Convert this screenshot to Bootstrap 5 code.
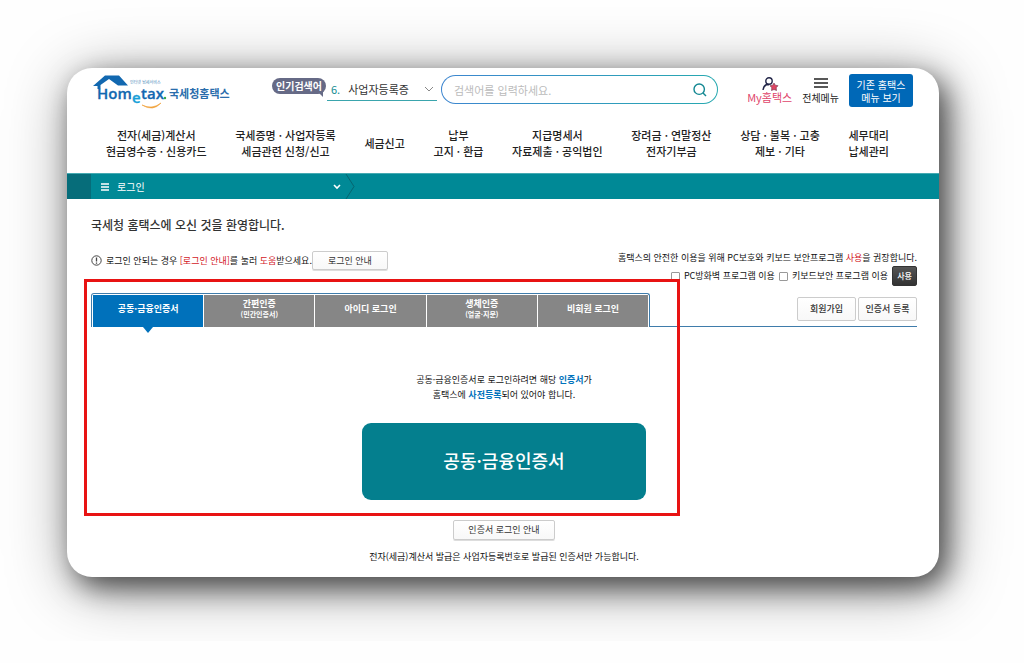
<!DOCTYPE html>
<html lang="ko">
<head>
<meta charset="utf-8">
<meta name="viewport" content="width=device-width, initial-scale=1">
<title>국세청 홈택스 로그인</title>
<link href="https://cdn.jsdelivr.net/npm/bootstrap@5.3.0/dist/css/bootstrap.min.css" rel="stylesheet">
<style>
  body { font-family: "Noto Sans CJK KR", sans-serif; font-size: 9px; line-height: 16px; color: #111; background: #fefefe; }
  a { color: inherit; text-decoration: none; }
  .shell { margin: 68px 85px 64px 67px; border-radius: 25px; background: #fff;
    box-shadow: 8px 10px 28px rgba(0,0,0,.62), 4px 10px 64px rgba(0,0,0,.4); }
  .shell-top { padding: 6px 26px 0 26px; height: 46px; }
  .logo { width: 138px; height: 36px; }
  .hot-tag { margin-left: 41px; padding: 0 4px; height: 16px; border-radius: 8px; background: #666a86; color: #fff; font-size: 10px; font-weight: 700; }
  .hot-tag::after { content: ""; position: absolute; right: 3px; bottom: -3px; border: 3px solid transparent; border-right-color: #666a86; border-top-color: #666a86; }
  .keyword { width: 110px; height: 24px; border-bottom: 1px solid #3aa5ad; margin: 3px 4px 0 1px; font-size: 11px; padding-left: 4px; }
  .keyword label { color: #138c92; }
  .keyword select { appearance: none; border: 0; background: none; color: #333; font-size: 11px; padding: 0; }
  .search { height: 29px; margin-top: 1px; border: 1px solid transparent; border-radius: 15px; padding: 0 10px 0 12px;
    background: linear-gradient(#fff,#fff) padding-box, linear-gradient(90deg,#3d86d0,#27a9b0) border-box; }
  .search input { border: 0; outline: 0; min-width: 0; font-size: 11px; color: #333; background: none; padding: 0; }
  .search input::placeholder { color: #bbb; }
  .search button { border: 0; background: none; padding: 0; line-height: 0; }
  .quick { font-size: 10px; line-height: 13px; color: #222; margin-top: 3px; }
  .quick svg { display: block; margin: 0 auto; }
  .my { color: #e0456b; font-size: 11px; margin: 3px 10px 0 29px; }
  .old-menu { width: 64px; height: 33px; margin-left: 10px; border: 0; border-radius: 3px; background: #0068b7; color: #fff; font-size: 10px; line-height: 13px; padding: 0; }
  .gnb { padding: 13px 50px 14px 39px; font-size: 11px; line-height: 16px; font-weight: 500; color: #222; }
  .crumb { height: 26px; background: #008996; color: #fff; font-size: 10px; border-top: 1px solid #45aab2; }
  .crumb-home { width: 24px; background: #066d7a; }
  .crumb-item { width: 264px; padding: 0 0 0 10px; }
  .content { padding: 18px 22px 12px 24px; }
  h1 { font-size: 12px; line-height: 16px; font-weight: 500; color: #333; margin: 0; }
  .red { color: #d3201f; }
  .blue { color: #0072bc; font-weight: 700; }
  .soft { border: 1px solid #ccc; border-radius: 2px; background: linear-gradient(#fff,#f8f8f8); color: #333; font-size: 9px; line-height: 12px; padding: 0; box-shadow: 0 1px 0 #ddd; }
  .soft-sm { width: 76px; height: 19px; }
  .soft-md { width: 102px; height: 20px; }
  .soft-lg { width: 59px; height: 24px; font-weight: 500; box-shadow: none; }
  .notice { margin-top: 17px; }
  .notice-left { padding-top: 1px; }
  .options input { appearance: none; width: 9px; height: 9px; border: 1px solid #999; border-radius: 1px; background: #fff; margin: 0; }
  .use { width: 25px; height: 20px; border: 1px solid #333; border-radius: 2px; background: linear-gradient(#555,#333); color: #fff; font-size: 8px; line-height: 12px; padding: 0; font-weight: 500; }
  .login-area { margin-top: 7px; padding-bottom: 16px; }
  .highlight { left: -7px; top: -14px; bottom: 0; width: 72.2%; border: 3px solid #e81313; pointer-events: none; }
  .tab-row { border-bottom: 1px solid #3f7cab; height: 34px; }
  .login-tabs { width: 67.7%; height: 34px; border: 1px solid #3f7cab; border-bottom: 0; border-radius: 3px 3px 0 0; padding: 1px 1px 0; gap: 1px; background: #fff; }
  .login-tabs button { flex: 1 1 0; border: 0; padding: 0 0 6px; background: #868686; color: #fff; font-size: 9px; line-height: 11px; font-weight: 700; }
  .login-tabs small { display: block; font-size: 7px; line-height: 11px; }
  .login-tabs .two { padding-bottom: 4px; }
  .login-tabs .active { background: #0071bb; position: relative; }
  .login-tabs .active::after { content: ""; position: absolute; left: 50%; top: 100%; margin-left: -5px; border: 5px solid transparent; border-top: 6px solid #0071bb; border-bottom: 0; }
  .tab-side { gap: 2px; }
  .guide { margin-top: 45px; line-height: 15px; }
  .cert { width: 284px; height: 77px; margin-top: 21px; border: 0; border-radius: 9px; background: #047f8e; color: #fff; font-size: 18px; font-weight: 500; padding: 0 0 4px; }
  .issue { margin-top: 9px; }
</style>
</head>
<body>
<div class="shell">
  <header>
    <div class="shell-top d-flex align-items-start">
      <a href="#" class="logo flex-shrink-0" aria-label="홈택스">
        <svg width="138" height="36" viewBox="0 0 138 36">
          <path d="M0 12 12 1.500H26L35 11.500H25L16 5 7.500 11V15H4.500V12Z" fill="#1268b0"/>
          <text x="37" y="10" font-size="4" fill="#4b87b8">인터넷 납세서비스</text>
          <g font-family="Open Sans, sans-serif" font-weight="600" font-size="15" fill="#1268b0" stroke="#1268b0" stroke-width=".3">
            <text x="4" y="25">Hom</text><text x="39" y="29" fill="#18a0d8" stroke="#18a0d8">e</text><text x="48" y="25">tax</text>
          </g>
          <circle cx="72" cy="24" r="1.200" fill="#38a846"/>
          <path d="M49 31Q59 36 68 29Q60 38 49 31Z" fill="#f0a036" stroke="#f0a036" stroke-width=".6"/>
          <text x="76" y="24" font-size="11" font-weight="700" fill="#2a6dac">국세청홈택스</text>
        </svg>
      </a>
      <span class="hot-tag position-relative flex-shrink-0 mt-1">인기검색어</span>
      <div class="keyword d-flex align-items-center flex-shrink-0 position-relative">
        <label for="kw" class="me-2">6.</label>
        <select id="kw" class="flex-grow-1"><option>사업자등록증</option></select>
        <svg class="position-absolute end-0 me-1" width="8" height="6" viewBox="0 0 8 6" fill="none" stroke="#888"><path d="m0 1 4 4 4-4"/></svg>
      </div>
      <form class="search d-flex align-items-center flex-grow-1">
        <input class="flex-grow-1" type="text" placeholder="검색어를 입력하세요." aria-label="검색어">
        <button type="button" aria-label="검색"><svg width="14" height="14" viewBox="0 0 14 14" fill="none" stroke="#128792" stroke-width="1.4"><circle cx="6.2" cy="6.2" r="5.2"/><path d="m10 10 3 3"/></svg></button>
      </form>
      <a href="#" class="quick my text-center flex-shrink-0">
        <svg width="18" height="14" viewBox="0 0 18 14"><g fill="none" stroke="#222548" stroke-width="1.4"><circle cx="8" cy="4" r="3.200"/><path d="M2 13Q2.500 9 5.500 7.500L8 7.800"/></g><path d="m13 6 1.200 2.200 2.800.5-1.800 2 .3 2.800-2.500-1-2.500 1 .3-2.800-1.800-2 2.800-.5Z" fill="#df4663" stroke="#6b304c" stroke-width=".6"/></svg>My홈택스</a>
      <a href="#" class="quick text-center flex-shrink-0">
        <svg width="14" height="14" viewBox="0 0 14 14" stroke="#222" stroke-width="1.400"><path d="M0 2h14M0 6h14M0 10h14"/></svg>전체메뉴</a>
      <button class="old-menu flex-shrink-0">기존 홈택스<br>메뉴 보기</button>
    </div>
    <nav class="gnb d-flex justify-content-between align-items-center text-center text-nowrap">
      <a href="#">전자(세금)계산서<br>현금영수증 · 신용카드</a>
      <a href="#">국세증명 · 사업자등록<br>세금관련 신청/신고</a>
      <a href="#">세금신고</a>
      <a href="#">납부<br>고지 · 환급</a>
      <a href="#">지급명세서<br>자료제출 · 공익법인</a>
      <a href="#">장려금 · 연말정산<br>전자기부금</a>
      <a href="#">상담 · 불복 · 고충<br>제보 · 기타</a>
      <a href="#">세무대리<br>납세관리</a>
    </nav>
    <div class="crumb d-flex">
      <div class="crumb-home"></div>
      <a href="#" class="crumb-item d-flex align-items-center">
        <svg width="8" height="8" viewBox="0 0 8 8" stroke="#fff" stroke-width="1.400"><path d="M0 1h8M0 4h8M0 7h8"/></svg>
        <span class="ms-2 flex-grow-1">로그인</span>
        <svg class="me-1" width="8" height="6" viewBox="0 0 8 6" fill="none" stroke="#fff" stroke-width="1.600"><path d="m1 1 3 3 3-3"/></svg>
        <svg width="10" height="25" viewBox="0 0 10 25" fill="none" stroke="#066570"><path d="m1 0 8 12.500L1 25"/></svg>
      </a>
    </div>
  </header>

  <main class="content">
    <h1>국세청 홈택스에 오신 것을 환영합니다.</h1>
    <div class="notice d-flex justify-content-between align-items-start text-nowrap">
      <div class="notice-left d-flex align-items-center">
        <svg class="me-1" width="11" height="11" viewBox="0 0 11 11" fill="none" stroke="#444"><circle cx="5.500" cy="5.500" r="4.700"/><path d="M5.500 2.500v4M5.500 7.500v1.200" stroke-width="1.300"/></svg>
        <span>로그인 안되는 경우 <span class="red">[로그인 안내]</span>를 눌러 <span class="red">도움</span>받으세요.</span>
        <button class="soft soft-sm">로그인 안내</button>
      </div>
      <div class="text-end">
        <div>홈택스의 안전한 이용을 위해 PC보호와 키보드 보안프로그램 <span class="red">사용</span>을 권장합니다.</div>
        <div class="options d-flex align-items-center justify-content-end gap-1">
          <input type="checkbox" id="fw"><label for="fw">PC방화벽 프로그램 이용</label>
          <input type="checkbox" id="kb"><label for="kb">키보드보안 프로그램 이용</label>
          <button class="use">사용</button>
        </div>
      </div>
    </div>

    <section class="login-area position-relative text-center">
      <div class="tab-row d-flex justify-content-between align-items-start">
        <div class="login-tabs d-flex" role="tablist">
          <button class="active" role="tab" aria-selected="true">공동·금융인증서</button>
          <button class="two" role="tab">간편인증<small>(민간인증서)</small></button>
          <button role="tab">아이디 로그인</button>
          <button class="two" role="tab">생체인증<small>(얼굴·지문)</small></button>
          <button role="tab">비회원 로그인</button>
        </div>
        <div class="tab-side d-flex pt-1">
          <button class="soft soft-lg">회원가입</button>
          <button class="soft soft-lg">인증서 등록</button>
        </div>
      </div>
      <p class="guide mb-0">공동·금융인증서로 로그인하려면 해당 <span class="blue">인증서</span>가<br>홈택스에 <span class="blue">사전등록</span>되어 있어야 합니다.</p>
      <button class="cert">공동·금융인증서</button>
      <div class="highlight position-absolute"></div>
    </section>
    <div class="text-center">
      <button class="soft soft-md mt-1">인증서 로그인 안내</button>
      <p class="issue mb-0">전자(세금)계산서 발급은 사업자등록번호로 발급된 인증서만 가능합니다.</p>
    </div>
  </main>
</div>
<script src="https://cdn.jsdelivr.net/npm/bootstrap@5.3.0/dist/js/bootstrap.bundle.min.js"></script>
</body>
</html>
